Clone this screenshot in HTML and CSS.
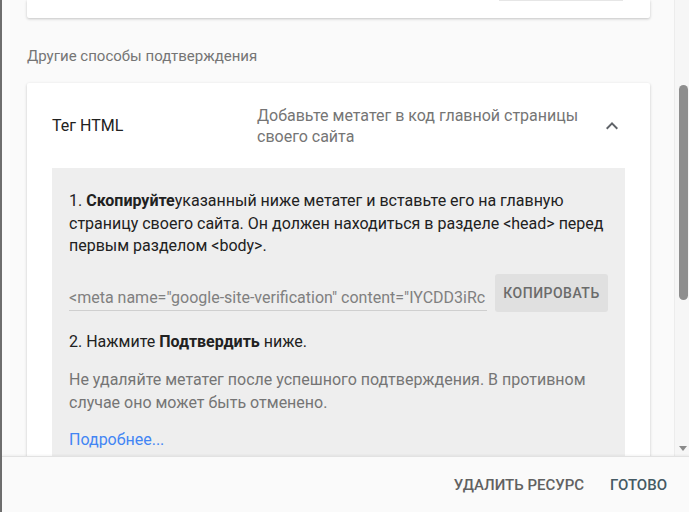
FILE: index.html
```html
<!DOCTYPE html>
<html lang="ru">
<head>
    <meta charset="UTF-8">
    <meta name="viewport" content="width=device-width, initial-scale=1.0">
    <title>Подтверждение ресурса</title>
    <link rel="stylesheet" href="styles.css">
</head>
<body>
    <div class="dialog">
        <div class="content">
            <div class="scroll-area">
                <div class="card card-top">
                    <div class="top-button"></div>
                </div>

                <div class="section-title">Другие способы подтверждения</div>

                <div class="card method">
                    <div class="method-header">
                        <div class="method-name">Тег HTML</div>
                        <div class="method-desc">Добавьте метатег в код главной страницы своего сайта</div>
                        <svg class="chevron" width="24" height="24" viewBox="0 0 24 24">
                            <path d="M7.4 15.4 12 10.8l4.6 4.6L18 14l-6-6-6 6z" fill="#5f6368"/>
                        </svg>
                    </div>
                    <div class="method-body">
                        <p class="step">1. <b>Скопируйте</b>указанный ниже метатег и вставьте его на главную страницу своего сайта. Он должен находиться в разделе &lt;head&gt; перед первым разделом &lt;body&gt;.</p>
                        <div class="copy-row">
                            <div class="meta-field">&lt;meta name="google-site-verification" content="IYCDD3iRc</div>
                            <button type="button" class="copy-btn">Копировать</button>
                        </div>
                        <p class="step">2. Нажмите <b>Подтвердить</b> ниже.</p>
                        <p class="note">Не удаляйте метатег после успешного подтверждения. В противном случае оно может быть отменено.</p>
                        <a class="more" href="#">Подробнее...</a>
                    </div>
                </div>
            </div>
            <div class="scrollbar">
                <div class="thumb"></div>
                <div class="arrow-down"></div>
            </div>
        </div>
        <div class="footer">
            <button type="button" class="flat-btn">Удалить ресурс</button>
            <button type="button" class="flat-btn primary">Готово</button>
        </div>
    </div>
</body>
</html>
```

FILE: styles.css
```css
html, body {
    margin: 0;
    height: 100%;
    overflow: hidden;
}
body {
    font-family: Roboto, "Noto Sans", sans-serif;
    background: #fafafa;
    color: #212121;
}
.dialog {
    height: 512px;
    display: flex;
    flex-direction: column;
    border-left: 2px solid #6e6e6e;
    box-sizing: border-box;
}
.content {
    flex: 1;
    display: flex;
    overflow: hidden;
}
.scroll-area {
    width: 623px;
    padding-left: 25px;
}
.card {
    background: #fff;
    border-radius: 2px;
    box-shadow: 0 1px 3px rgba(0, 0, 0, 0.22);
}
.card-top {
    height: 18px;
    border-radius: 0 0 2px 2px;
    position: relative;
}
.top-button {
    position: absolute;
    right: 27px;
    bottom: 17px;
    width: 124px;
    height: 1px;
    background: #e6e6e6;
}
.section-title {
    font-size: 15px;
    color: #757575;
    margin: 29px 0 0;
    line-height: 18px;
    height: 36px;
}
.method {
    padding: 0 25px;
    min-height: 400px;
}
.method-header {
    display: flex;
    align-items: center;
    height: 85px;
}
.method-name {
    font-size: 16px;
    width: 205px;
    color: #212121;
}
.method-desc {
    width: 330px;
    font-size: 16px;
    line-height: 21px;
    color: #757575;
}
.chevron {
    margin-left: 13px;
}
.method-body {
    background: #eeeeee;
    padding: 22px 17px 20px;
    font-size: 16px;
    line-height: 22.5px;
    color: #212121;
}
.step {
    margin: 0;
}
.step b {
    font-weight: 700;
}
.copy-row {
    display: flex;
    align-items: center;
    margin: 16px 0 19px;
}
.meta-field {
    width: 418px;
    white-space: nowrap;
    overflow: hidden;
    color: #808080;
    font-size: 16px;
    border-bottom: 1px solid #cfcfcf;
    padding-top: 12px;
    line-height: 24px;
}
.copy-btn {
    margin-left: 8px;
    width: 113px;
    height: 38px;
    border: none;
    border-radius: 3px;
    background: #e0e0e0;
    color: #6b6b6b;
    font-family: Roboto, sans-serif;
    font-size: 14px;
    font-weight: 500;
    text-transform: uppercase;
    letter-spacing: 0.5px;
    padding: 0;
}
.note {
    margin: 16px 0 15px;
    color: #757575;
}
.more {
    color: #4285f4;
    text-decoration: none;
}
.scrollbar {
    margin-left: auto;
    width: 14px;
    background: #f6f6f6;
    border-left: 1px solid #ececec;
    position: relative;
}
.thumb {
    position: absolute;
    left: 4px;
    top: 85px;
    width: 9px;
    height: 215px;
    border-radius: 5px;
    background: #8e8e8e;
}
.arrow-down {
    position: absolute;
    left: 4px;
    bottom: 5px;
    width: 0;
    height: 0;
    border-left: 4px solid transparent;
    border-right: 4px solid transparent;
    border-top: 5px solid #8a8a8a;
}
.footer {
    height: 55px;
    flex-shrink: 0;
    background: #fafafa;
    border-top: 1px solid #e2e2e2;
    box-shadow: 0 -1px 2px rgba(0, 0, 0, 0.05);
    display: flex;
    justify-content: flex-end;
    align-items: center;
    padding-right: 14px;
    gap: 10px;
    position: relative;
}
.flat-btn {
    background: none;
    border: none;
    font-family: Roboto, sans-serif;
    font-size: 15px;
    font-weight: 500;
    text-transform: uppercase;
    color: #616161;
    padding: 8px 8px;
}
.flat-btn.primary {
    color: #455a64;
}
```
